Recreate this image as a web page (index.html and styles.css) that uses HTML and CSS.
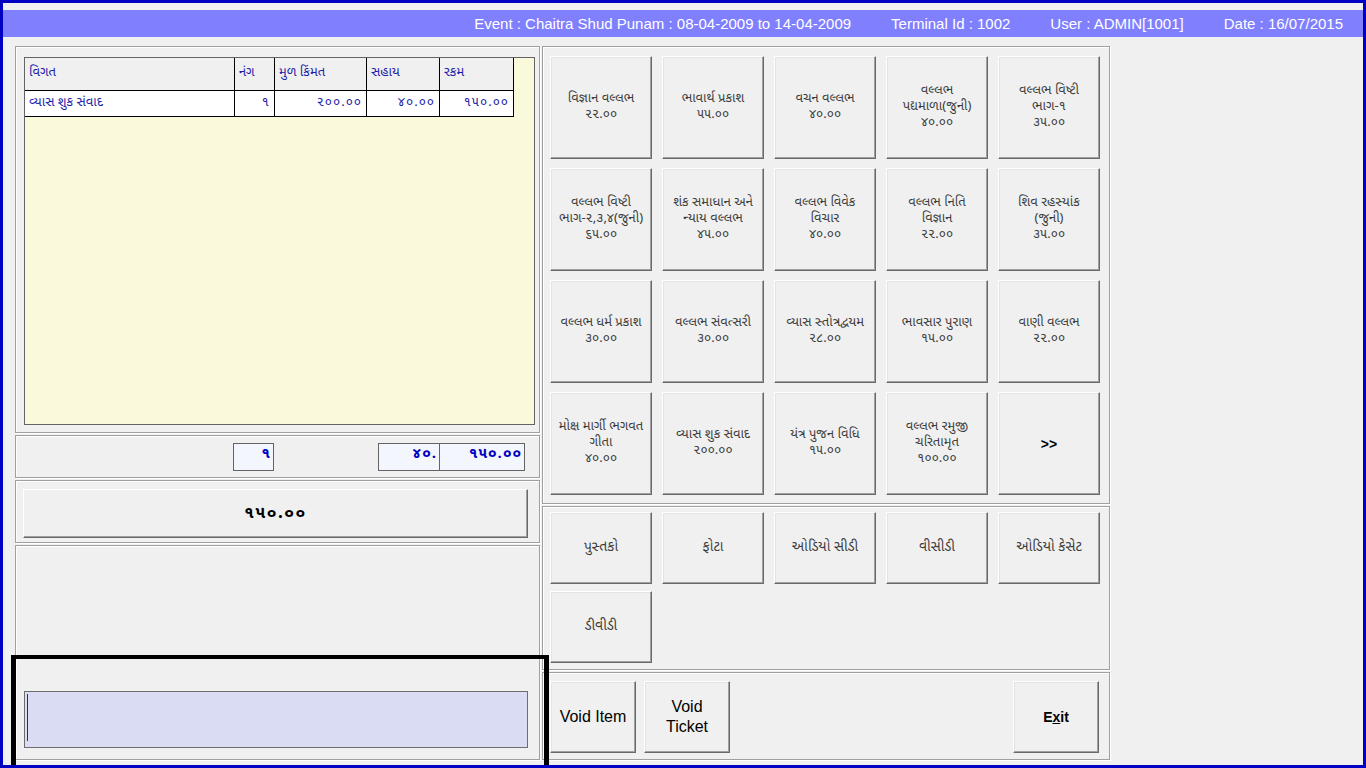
FILE: index.html
```html
<!DOCTYPE html>
<html>
<head>
<meta charset="utf-8">
<title>POS</title>
<link rel="stylesheet" href="styles.css">
</head>
<body>
<div class="window">
  <div class="topbar">
    <span>Event : Chaitra Shud Punam : 08-04-2009 to 14-04-2009</span>
    <span>Terminal Id : 1002</span>
    <span>User : ADMIN[1001]</span>
    <span>Date : 16/07/2015</span>
  </div>
  <div class="main">
    <div class="left">
      <div class="panel p-grid">
        <div class="grid">
          <div class="grow ghead">
            <div class="c c1">વિગત</div>
            <div class="c c2">નંગ</div>
            <div class="c c3">મુળ કિંમત</div>
            <div class="c c4">સહાય</div>
            <div class="c c5">રકમ</div>
          </div>
          <div class="grow gdata">
            <div class="c c1">વ્યાસ શુક સંવાદ</div>
            <div class="c c2 r">૧</div>
            <div class="c c3 r">૨૦૦.૦૦</div>
            <div class="c c4 r">૪૦.૦૦</div>
            <div class="c c5 r">૧૫૦.૦૦</div>
          </div>
        </div>
      </div>
      <div class="panel p-totals">
        <div class="tbox tb1">૧</div>
        <div class="tgroup">
          <div class="tbox tb2">૪૦.</div>
          <div class="tbox tb3">૧૫૦.૦૦</div>
        </div>
      </div>
      <div class="panel p-total">
        <div class="bigbtn">૧૫૦.૦૦</div>
      </div>
      <div class="panel p-input">
        <div class="inputbox"><span class="caret"></span></div>
      </div>
    </div>
    <div class="right">
      <div class="panel p-products">
        <div class="btn prod"><span>વિજ્ઞાન વલ્લભ</span><span>૨૨.૦૦</span></div>
        <div class="btn prod"><span>ભાવાર્થ પ્રકાશ</span><span>૫૫.૦૦</span></div>
        <div class="btn prod"><span>વચન વલ્લભ</span><span>૪૦.૦૦</span></div>
        <div class="btn prod"><span>વલ્લભ</span><span>પદ્યમાળા(જુની)</span><span>૪૦.૦૦</span></div>
        <div class="btn prod"><span>વલ્લભ વિષ્ટી</span><span>ભાગ-૧</span><span>૩૫.૦૦</span></div>

        <div class="btn prod"><span>વલ્લભ વિષ્ટી</span><span>ભાગ-૨,૩,૪(જુની)</span><span>૬૫.૦૦</span></div>
        <div class="btn prod"><span>શંક સમાધાન અને</span><span>ન્યાય વલ્લભ</span><span>૪૫.૦૦</span></div>
        <div class="btn prod"><span>વલ્લભ વિવેક</span><span>વિચાર</span><span>૪૦.૦૦</span></div>
        <div class="btn prod"><span>વલ્લભ નિતિ</span><span>વિજ્ઞાન</span><span>૨૨.૦૦</span></div>
        <div class="btn prod"><span>શિવ રહસ્યાંક</span><span>(જુની)</span><span>૩૫.૦૦</span></div>

        <div class="btn prod"><span>વલ્લભ ધર્મ પ્રકાશ</span><span>૩૦.૦૦</span></div>
        <div class="btn prod"><span>વલ્લભ સંવત્સરી</span><span>૩૦.૦૦</span></div>
        <div class="btn prod"><span>વ્યાસ સ્તોત્રદ્વયમ</span><span>૨૮.૦૦</span></div>
        <div class="btn prod"><span>ભાવસાર પુરાણ</span><span>૧૫.૦૦</span></div>
        <div class="btn prod"><span>વાણી વલ્લભ</span><span>૨૨.૦૦</span></div>

        <div class="btn prod"><span>મોક્ષ માર્ગી ભગવત</span><span>ગીતા</span><span>૪૦.૦૦</span></div>
        <div class="btn prod"><span>વ્યાસ શુક સંવાદ</span><span>૨૦૦.૦૦</span></div>
        <div class="btn prod"><span>યંત્ર પુજન વિધિ</span><span>૧૫.૦૦</span></div>
        <div class="btn prod"><span>વલ્લભ રમુજી</span><span>ચરિતામૃત</span><span>૧૦૦.૦૦</span></div>
        <div class="btn prod more">&gt;&gt;</div>
      </div>
      <div class="panel p-cats">
        <div class="btn cat">પુસ્તકો</div>
        <div class="btn cat">ફોટા</div>
        <div class="btn cat">ઓડિયો સીડી</div>
        <div class="btn cat">વીસીડી</div>
        <div class="btn cat">ઓડિયો કેસેટ</div>
        <div class="btn cat">ડીવીડી</div>
      </div>
      <div class="panel p-actions">
        <div class="btn act"><span>Void Item</span></div>
        <div class="btn act"><span>Void<br>Ticket</span></div>
        <div class="spacer"></div>
        <div class="btn act exit"><span>E<u>x</u>it</span></div>
      </div>
    </div>
  </div>
  <div class="focusframe"></div>
</div>
</body>
</html>
```
FILE: styles.css
```css
html, body {
  margin: 0;
  padding: 0;
}
body {
  width: 1366px;
  height: 768px;
  overflow: hidden;
  font-family: "Noto Sans Gujarati", "Lohit Gujarati", "Shruti", "Liberation Sans", sans-serif;
}
.window {
  position: relative;
  box-sizing: border-box;
  width: 1366px;
  height: 768px;
  border: 3px solid #0000c4;
  background: #f0f0f0;
  overflow: hidden;
}
.topbar {
  margin-top: 7px;
  height: 27px;
  background: #8080ff;
  display: flex;
  justify-content: flex-end;
  align-items: center;
  gap: 40px;
  padding-right: 20px;
  color: #fff;
  font-family: "Liberation Sans", Arial, sans-serif;
  font-size: 15px;
}
.main {
  display: grid;
  grid-template-columns: 525px 568px;
  column-gap: 2px;
  margin-top: 9px;
  margin-left: 12px;
}
.left, .right {
  display: flex;
  flex-direction: column;
  gap: 2px;
}
.panel {
  box-sizing: border-box;
  border: 1px solid #a0a0a0;
  box-shadow: inset 1px 1px 0 #fff, 1px 1px 0 #fff;
}
/* grid panel */
.p-grid {
  height: 387px;
  padding: 10px 4px 7px 8px;
}
.grid {
  box-sizing: border-box;
  height: 100%;
  background: #fbf9db;
  border: 1px solid #646464;
  font-size: 13px;
  color: #1c1ca8;
}
.grow {
  display: flex;
}
.c {
  box-sizing: border-box;
  border-right: 1px solid #000;
  border-bottom: 1px solid #000;
  padding: 0 4px;
  white-space: nowrap;
  overflow: hidden;
}
.ghead .c {
  height: 33px;
  background: #f0f0f0;
  line-height: 30px;
}
.gdata .c {
  height: 26px;
  background: #fff;
  line-height: 24px;
}
.c1 { width: 210px; }
.c2 { width: 40px; }
.c3 { width: 92px; }
.c4 { width: 73px; }
.c5 { width: 74px; }
.r { text-align: right; letter-spacing: 1px; }

/* totals */
.p-totals {
  height: 43px;
  display: flex;
  align-items: flex-start;
  padding-top: 7px;
  padding-left: 217px;
}
.tbox {
  box-sizing: border-box;
  height: 28px;
  border: 1px solid #646464;
  background: #f3f6fc;
  color: #0000c0;
  font-weight: bold;
  font-size: 15px;
  letter-spacing: 1px;
  text-align: right;
  padding-right: 2px;
  line-height: 22px;
  overflow: hidden;
  white-space: nowrap;
}
.tb1 { width: 41px; }
.tgroup {
  display: flex;
  margin-left: 104px;
}
.tb2 { width: 62px; }
.tb3 { width: 85px; border-left: none; }

/* total button */
.p-total {
  height: 63px;
  padding: 8px 11px 0 7px;
}
.bigbtn {
  box-sizing: border-box;
  height: 49px;
  background: #f0f0f0;
  border: 1px solid;
  border-color: #fff #696969 #696969 #fff;
  box-shadow: inset -1px -1px 0 #a0a0a0;
  display: flex;
  align-items: center;
  justify-content: center;
  font-size: 17px;
  letter-spacing: 1.5px;
  font-weight: bold;
  color: #000;
}

/* input panel */
.p-input {
  height: 215px;
  display: flex;
  flex-direction: column;
  justify-content: flex-end;
  padding: 0 11px 11px 8px;
}
.inputbox {
  box-sizing: border-box;
  height: 57px;
  background: #dadcf4;
  border: 1px solid #6d6d6d;
  padding: 2px 1px;
}
.caret {
  display: block;
  width: 1px;
  height: 47px;
  background: #333;
  margin-left: 1px;
}
.focusframe {
  position: absolute;
  left: 8px;
  top: 652px;
  width: 528px;
  height: 130px;
  border: 5px solid #000;
  border-top-width: 4px;
}

/* right side */
.btn {
  box-sizing: border-box;
  background: #f0f0f0;
  border: 1px solid;
  border-color: #fff #696969 #696969 #fff;
  box-shadow: inset -1px -1px 0 #a0a0a0, inset 1px 1px 0 #e3e3e3;
  display: flex;
  flex-direction: column;
  align-items: center;
  justify-content: center;
  text-align: center;
  color: #3c3c3c;
  overflow: hidden;
}
.p-products {
  height: 458px;
  display: grid;
  grid-template-columns: repeat(5, 102px);
  grid-auto-rows: 103px;
  column-gap: 10px;
  row-gap: 9px;
  padding: 9px 0 0 7px;
}
.prod {
  font-size: 13px;
  line-height: 16px;
  padding-bottom: 1px;
}
.prod span {
  white-space: nowrap;
}
.more {
  font-family: "Liberation Sans", Arial, sans-serif;
  font-weight: bold;
  font-size: 14px;
  color: #000;
  padding-bottom: 0;
}
.p-cats {
  height: 164px;
  display: grid;
  grid-template-columns: repeat(5, 102px);
  grid-auto-rows: 72px;
  column-gap: 10px;
  row-gap: 7px;
  padding: 5px 0 0 7px;
}
.cat {
  font-size: 14px;
  padding-bottom: 2px;
}
.p-actions {
  height: 88px;
  display: flex;
  align-items: flex-start;
  gap: 8px;
  padding: 8px 10px 0 7px;
}
.act {
  width: 86px;
  height: 72px;
  font-family: "Liberation Sans", Arial, sans-serif;
  font-size: 16px;
  line-height: 20px;
  color: #000;
}
.spacer {
  flex: 1;
}
.exit {
  font-weight: bold;
  font-size: 14px;
}
```
